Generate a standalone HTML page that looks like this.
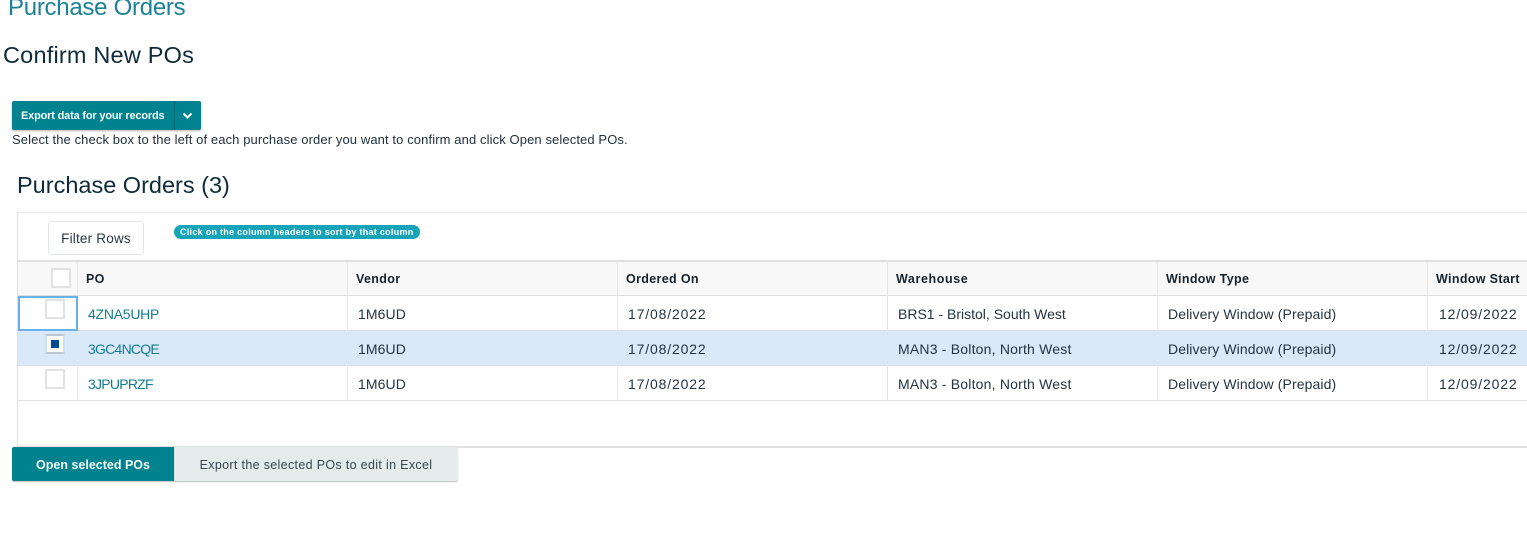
<!DOCTYPE html>
<html lang="en"><head><meta charset="utf-8"><title>Purchase Orders</title>
<style>
html,body{margin:0;padding:0;background:#fff}
body{width:1527px;height:547px;overflow:hidden;position:relative;font-family:"Liberation Sans",Arial,sans-serif;color:#0f2b3c}
.a{position:absolute;white-space:nowrap}
.t{position:absolute;white-space:nowrap;line-height:20px;font-size:14px;color:#25343f}
.d{letter-spacing:.85px}
.w{letter-spacing:.1px}
.m{letter-spacing:.2px}
.v{letter-spacing:.1px}
.h{position:absolute;white-space:nowrap;line-height:20px;font-size:12.5px;font-weight:bold;color:#16232d;top:269px;letter-spacing:.34px}
.l{color:#147c90;letter-spacing:-.75px}
.hl{position:absolute;height:1px;background:#e0e0e0;left:18px;width:1509px}
.vl{position:absolute;width:1px;background:#e6e6e6;top:261px;height:140px}
.cb{position:absolute;box-sizing:border-box;width:20px;height:20px;border:2px solid #e2e2e2;background:#fff}
</style></head><body>
<div class="a" style="left:8px;top:-6px;font-size:24px;line-height:28px;letter-spacing:-.27px;color:#1b8297">Purchase Orders</div>
<div class="a" style="left:3px;top:41px;font-size:23.5px;line-height:28px;letter-spacing:.2px;color:#0f2a38">Confirm New POs</div>

<div class="a" style="left:12px;top:101px;width:189px;height:29px;background:#00838f;border-radius:2px;box-shadow:0 1px 2px rgba(0,0,0,.3)"></div>
<div class="a" style="left:174px;top:101px;width:1px;height:29px;background:#0b6b78"></div>
<div class="a" style="left:21px;top:107px;font-size:11px;line-height:18px;font-weight:bold;letter-spacing:-.18px;color:#f2fbfc">Export data for your records</div>
<svg class="a" style="left:182px;top:112px" width="11" height="8" viewBox="0 0 11 8"><path d="M1.5 1.5 L5.5 5.5 L9.5 1.5" fill="none" stroke="#fff" stroke-width="2"/></svg>
<div class="a" style="left:12px;top:130px;font-size:13px;line-height:20px;letter-spacing:.105px;color:#1f2f3a">Select the check box to the left of each purchase order you want to confirm and click Open selected POs.</div>
<div class="a" style="left:17px;top:170px;font-size:23.5px;line-height:30px;color:#0f2a38">Purchase Orders (3)</div>

<div class="a" style="left:17px;top:212px;width:1510px;height:1px;background:#e6e8ea"></div>
<div class="a" style="left:17px;top:212px;width:1px;height:235px;background:#e0e2e4"></div>
<div class="a" style="box-sizing:border-box;left:48px;top:221px;width:96px;height:34px;border:1px solid #e4e7ea;border-radius:3px;background:#fff;font-size:13.5px;line-height:34px;letter-spacing:.2px;text-align:center;color:#2a3842">Filter Rows</div>
<div class="a" style="left:174px;top:225px;width:246px;height:14px;border-radius:7px;background:#17a3b8;color:#fff;font-size:9px;line-height:14px;letter-spacing:.28px;font-weight:bold;text-indent:6px">Click on the column headers to sort by that column</div>

<div class="a" style="left:18px;top:261px;width:1509px;height:34px;background:#f8f8f8"></div>
<div class="a" style="left:18px;top:331px;width:1509px;height:34px;background:#d9e9f8"></div>
<div class="a" style="left:17px;top:260px;width:1510px;height:2px;background:#e0e0e0"></div>
<div class="hl" style="top:295px"></div><div class="hl" style="top:330px;background:#d8dfe6"></div><div class="hl" style="top:365px;background:#d8dfe6"></div><div class="hl" style="top:400px"></div>
<div class="a" style="left:17px;top:446px;width:1510px;height:2px;background:#e0e0e0"></div>
<div class="vl" style="left:77px"></div><div class="vl" style="left:347px"></div><div class="vl" style="left:617px"></div><div class="vl" style="left:887px"></div><div class="vl" style="left:1157px"></div><div class="vl" style="left:1427px"></div>
<div class="a" style="box-sizing:border-box;left:18px;top:296px;width:60px;height:35px;border:2px solid #6cb0ea;background:#fff"></div>

<div class="cb" style="left:51px;top:268px"></div>
<div class="cb" style="left:45px;top:299px"></div>
<div class="cb" style="left:45px;top:334px;border-color:#bcc8d4 #d2dfea"></div>
<div class="a" style="left:51px;top:340px;width:8px;height:8px;background:#054a91"></div>
<div class="cb" style="left:45px;top:369px"></div>

<div class="h" style="left:86px">PO</div><div class="h" style="left:356px">Vendor</div><div class="h" style="left:626px">Ordered On</div><div class="h" style="left:896px;letter-spacing:.6px">Warehouse</div><div class="h" style="left:1166px">Window Type</div><div class="h" style="left:1436px">Window Start</div>

<div class="t l" style="left:88px;top:304px;letter-spacing:-.25px">4ZNA5UHP</div><div class="t v" style="left:358px;top:304px">1M6UD</div><div class="t d" style="left:628px;top:304px">17/08/2022</div><div class="t" style="left:898px;top:304px">BRS1 - Bristol, South West</div><div class="t w" style="left:1168px;top:304px">Delivery Window (Prepaid)</div><div class="t d" style="left:1439px;top:304px">12/09/2022</div>
<div class="t l" style="left:88px;top:339px">3GC4NCQE</div><div class="t v" style="left:358px;top:339px">1M6UD</div><div class="t d" style="left:628px;top:339px">17/08/2022</div><div class="t m" style="left:898px;top:339px">MAN3 - Bolton, North West</div><div class="t w" style="left:1168px;top:339px">Delivery Window (Prepaid)</div><div class="t d" style="left:1439px;top:339px">12/09/2022</div>
<div class="t l" style="left:88px;top:374px">3JPUPRZF</div><div class="t v" style="left:358px;top:374px">1M6UD</div><div class="t d" style="left:628px;top:374px">17/08/2022</div><div class="t m" style="left:898px;top:374px">MAN3 - Bolton, North West</div><div class="t w" style="left:1168px;top:374px">Delivery Window (Prepaid)</div><div class="t d" style="left:1439px;top:374px">12/09/2022</div>

<div class="a" style="left:174px;top:447px;width:284px;height:34px;background:#e3ebeb;border-radius:0 2px 2px 0;box-shadow:0 1px 1px rgba(0,0,0,.25);color:#37474f;font-size:12.5px;line-height:36px;letter-spacing:.33px;text-align:center">Export the selected POs to edit in Excel</div>
<div class="a" style="left:12px;top:447px;width:162px;height:34px;background:#00838f;border-radius:2px 0 0 2px;box-shadow:0 1px 1px rgba(0,0,0,.25);color:#f2fbfc;font-size:12.5px;font-weight:bold;line-height:36px;text-align:center">Open selected POs</div>
</body></html>
